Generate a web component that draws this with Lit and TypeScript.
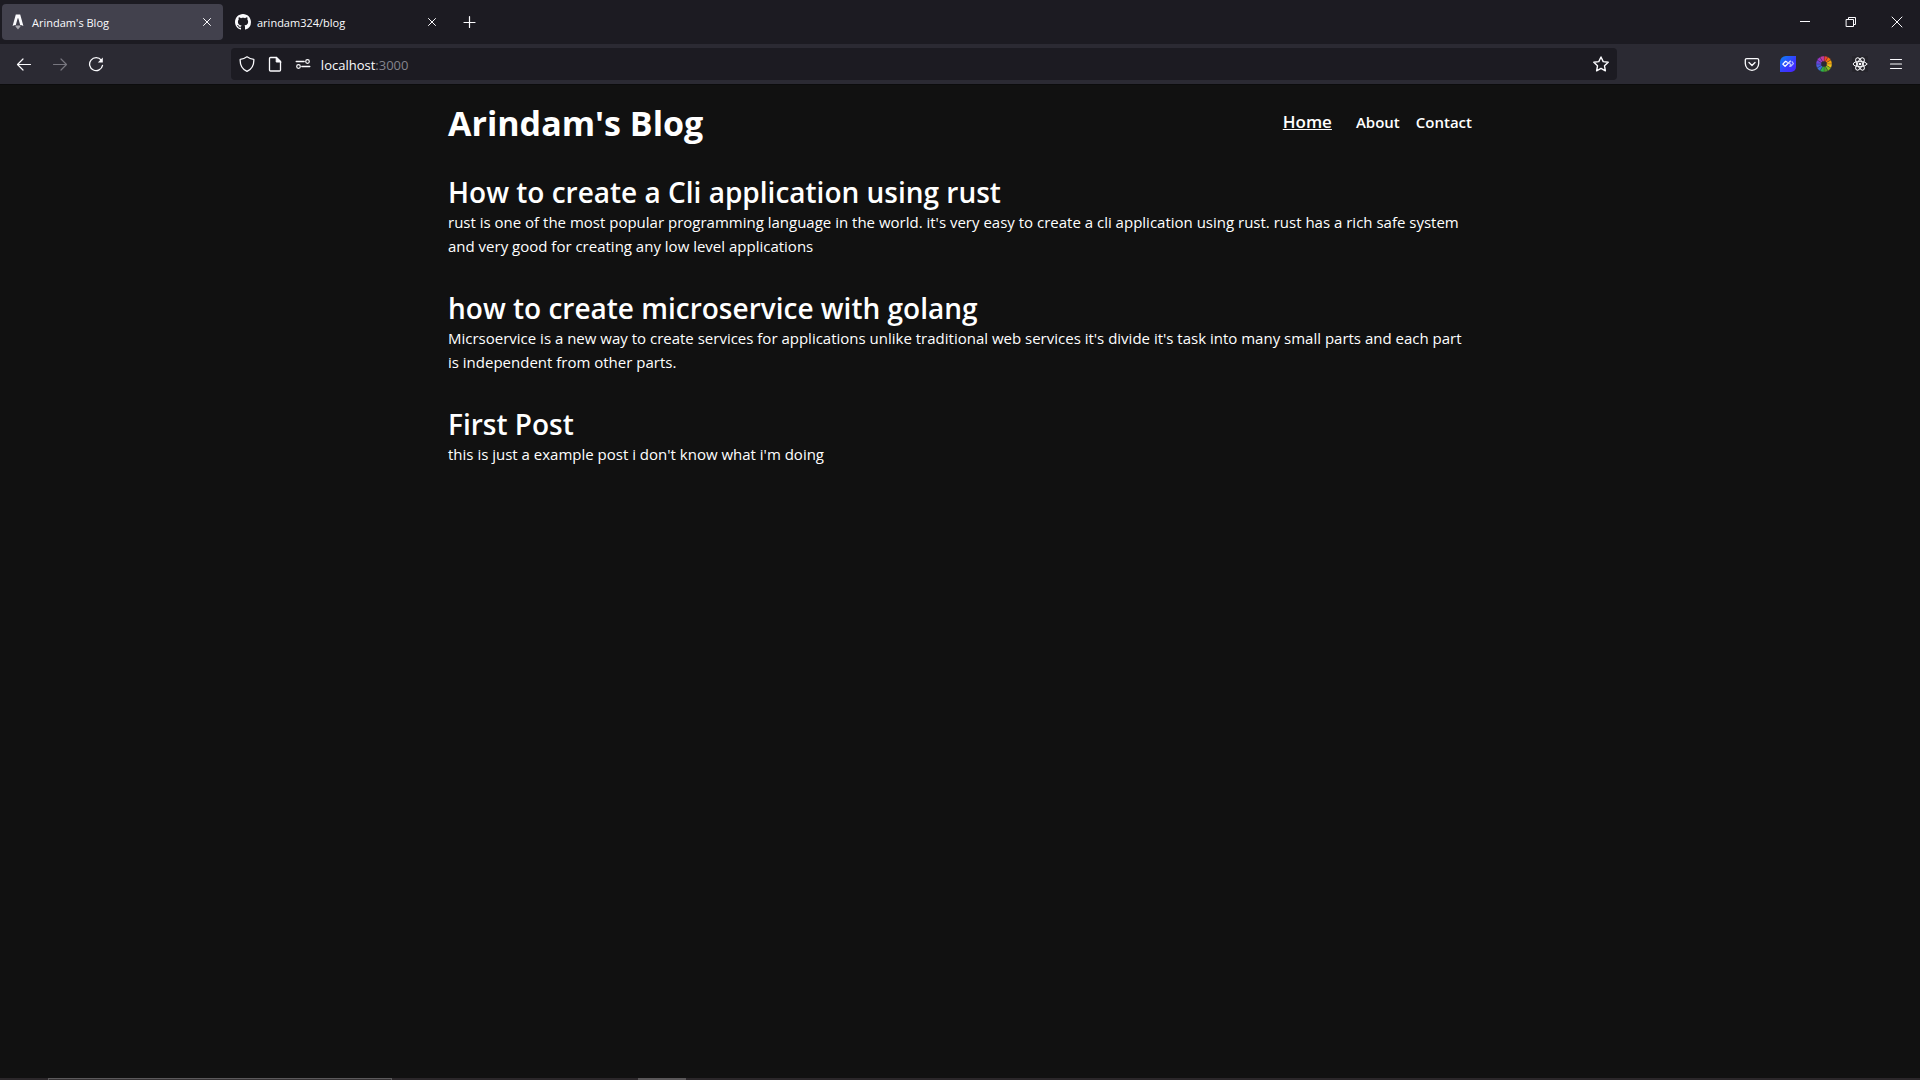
import { LitElement, html, css, svg } from "lit";
import { customElement } from "lit/decorators.js";

interface Post {
  title: string;
  body: string;
}

const posts: Post[] = [
  {
    title: "How to create a Cli application using rust",
    body: "rust is one of the most popular programming language in the world. it's very easy to create a cli application using rust. rust has a rich safe system and very good for creating any low level applications",
  },
  {
    title: "how to create microservice with golang",
    body: "Micrsoervice is a new way to create services for applications unlike traditional web services it's divide it's task into many small parts and each part is independent from other parts.",
  },
  {
    title: "First Post",
    body: "this is just a example post i don't know what i'm doing",
  },
];

const icon = (body: unknown, size = 16) => html`<svg
  width=${size} height=${size} viewBox="0 0 ${size} ${size}" fill="none"
  stroke="currentColor" stroke-linecap="round" stroke-linejoin="round" aria-hidden="true"
>${body}</svg>`;

const icons = {
  astro: icon(svg`
    <path d="M5.8.4h4.4L13.4 12a9 9 0 0 0-3.200-.9L8.300 4.200h-.6L5.800 11.100a9 9 0 0 0-3.200.9z" fill="currentColor" stroke="none"/>
    <path d="M5.400 11.600h5.200c.2 1.600-1.200 1.900-2.600 4-1.400-2.100-2.800-2.400-2.600-4z" fill="#a9a8b0" stroke="none"/>`),
  github: icon(svg`<path fill="currentColor" stroke="none" fill-rule="evenodd" d="M8 0C3.58 0 0 3.58 0 8c0 3.54 2.29 6.53 5.47 7.59.4.07.55-.17.55-.38 0-.19-.01-.82-.01-1.49-2.01.37-2.53-.49-2.69-.94-.09-.23-.48-.94-.82-1.13-.28-.15-.68-.52-.01-.53.63-.01 1.08.58 1.23.82.72 1.21 1.87.87 2.33.66.07-.52.28-.87.51-1.07-1.78-.2-3.64-.89-3.64-3.95 0-.87.31-1.59.82-2.15-.08-.2-.36-1.02.08-2.12 0 0 .67-.21 2.2.82.64-.18 1.32-.27 2-.27s1.36.09 2 .27c1.53-1.04 2.2-.82 2.2-.82.44 1.1.16 1.92.08 2.12.51.56.82 1.27.82 2.15 0 3.07-1.87 3.75-3.65 3.95.29.25.54.73.54 1.48 0 1.07-.01 1.93-.01 2.2 0 .21.15.46.55.38A8.01 8.01 0 0 0 16 8c0-4.42-3.58-8-8-8z"/>`),
  close: icon(svg`<path d="M4.5 4.5l7 7M11.5 4.5l-7 7"/>`),
  plus: icon(svg`<path d="M7.5 2.5v11M2 8.500h11" stroke-width="1.2"/>`),
  back: icon(svg`<path d="M14.5 8.500h-13M7 3L1.500 8.500 7 14" stroke-width="1.2"/>`),
  forward: icon(svg`<path d="M1.5 8.500h13M9 3l5.500 5.500L9 14" stroke-width="1.2"/>`),
  reload: icon(svg`<path d="M13.3 4.200A6.500 6.500 0 1 0 14.500 9.300" stroke-width="1.3"/><path d="M14.8 1.600v5h-5z" fill="currentColor" stroke="none"/>`),
  shield: icon(svg`<path d="M8 .8c2 1.500 4.300 2.300 6.800 2.500.3 5.200-1.700 9.700-6.800 12-5.100-2.300-7.100-6.800-6.800-12C3.700 3.100 6 2.300 8 .8z" stroke-width="1.3"/>`),
  page: icon(svg`<path d="M3.500 1.500h6l4 4v8.500q0 1-1 1h-9q-1 0-1-1v-11.500q0-1 1-1z" stroke-width="1.3"/><path d="M9.200 1.500v4.500h4.600z" fill="currentColor"/>`),
  permissions: icon(svg`<path d="M1.200 5.500h8M6.800 10.500h8" stroke-width="1.3"/><circle cx="12.5" cy="5.5" r="1.8" stroke-width="1.2"/><circle cx="3.5" cy="10.5" r="1.8" stroke-width="1.2"/>`),
  star: icon(svg`<path d="M8 1l2.200 4.600 5 .7-3.700 3.500.9 5-4.400-2.400-4.400 2.400.9-5L.8 6.300l5-.7z" stroke-width="1.4"/>`),
  pocket: icon(svg`<path d="M2.700 2.600h10.600q1.400 0 1.400 1.400v3.600a6.700 6.700 0 0 1-13.400 0V4q0-1.400 1.400-1.400z" stroke-width="1.3"/><path d="M5 6.600l3 2.800 3-2.800" stroke-width="1.4"/>`),
  daily: icon(svg`
    <defs><linearGradient id="tile" x1="0" y1="0" x2="1" y2="1"><stop offset="0" stop-color="#0a84f5"/><stop offset=".6" stop-color="#3a38ff"/><stop offset="1" stop-color="#4a22ff"/></linearGradient></defs>
    <path d="M6 0h10v11a5 5 0 0 1-5 5H0V6a6 6 0 0 1 6-6z" fill="url(#tile)" stroke="none"/>
    <path d="M7.200 6.200L5.600 5.300 2.800 8.100l2.300 2.300L10.300 5.300" stroke="#fff" stroke-width="1.3"/>
    <path d="M10.300 5.300L9 7l1.900 1.500-1.200 1.800M12 5.700l1.400 1.900-2.600 2.700" stroke="#b4bcff" stroke-width="1.2"/>`),
  wheel: icon(svg`${[
    "#ef3e36", "#f4720b", "#f9a70b", "#f3c01c", "#8bbf1c", "#4d9e2c",
    "#2fb14a", "#3a74d8", "#4a5be0", "#6a45dc", "#9a38c8", "#c03aa0",
  ].map((color, i) => svg`<path d="M8 8V0a8 8 0 0 1 4 1.070z" fill=${color} stroke="#2b2a33" stroke-width=".3" transform="rotate(${i * 30} 8 8)"/>`)}
    <circle cx="8" cy="8" r="2.8" fill="#2b2a33" stroke="none"/>`),
  react: icon(svg`<rect width="16" height="16" fill="#25242b" stroke="none"/>
    ${[0, 60, 120].map((a) => svg`<ellipse cx="8" cy="8" rx="6.8" ry="2.700" stroke-width="1" transform="rotate(${a} 8 8)"/>`)}
    <circle cx="8" cy="8" r="1.3" fill="currentColor" stroke="none"/>`),
  menu: icon(svg`<path d="M2.500 3.500h11M2.500 8h11M2.500 12.500h11" stroke-width="1.2"/>`),
  minimize: icon(svg`<path d="M3 7.500h10" stroke-linecap="butt"/>`),
  restore: icon(svg`<path d="M3.500 5.500h7v7h-7zM5.500 5.500v-2h7v7h-2" stroke-linejoin="miter"/>`),
  quit: icon(svg`<path d="M3 3l10 10M13 3L3 13"/>`),
};

@customElement("browser-chrome")
export class BrowserChrome extends LitElement {
  static styles = css`
    :host {
      display: block;
      color: #fbfbfe;
      font-family: "Open Sans", sans-serif;
    }
    svg {
      display: block;
    }
    button {
      display: grid;
      place-items: center;
      flex: none;
      padding: 0;
      border: 0;
      background: none;
      color: inherit;
      width: 36px;
      height: 32px;
    }
    .strip {
      display: flex;
      align-items: center;
      height: 44px;
      padding-left: 2px;
      background: #1c1b22;
    }
    .tab {
      display: flex;
      align-items: center;
      box-sizing: border-box;
      width: 221px;
      height: 36px;
      padding: 0 4px 0 8px;
      margin-right: 4px;
      border-radius: 4px;
      font-size: 11px;
    }
    .active {
      background: #42414d;
    }
    .label {
      flex: 1;
      padding-left: 6px;
    }
    .close {
      width: 24px;
      height: 24px;
    }
    .controls {
      display: flex;
      margin-left: auto;
    }
    .controls button {
      width: 46px;
    }
    .bar {
      display: flex;
      align-items: center;
      height: 40px;
      padding: 0 6px;
      background: #2b2a33;
    }
    .space {
      flex: 117;
    }
    .address {
      flex: 1386;
      display: flex;
      align-items: center;
      box-sizing: border-box;
      height: 32px;
      padding-left: 2px;
      border-radius: 4px;
      background: #1c1b22;
      font-size: 13px;
    }
    .address button {
      width: 28px;
    }
    .address .star {
      width: 32px;
    }
    .url {
      flex: 1;
      padding: 2px 0 0 4px;
    }
    .port {
      color: #85848d;
    }
    .disabled {
      color: #77767f;
    }
  `;

  render() {
    return html`
      <div class="strip">
        <div class="tab active">
          ${icons.astro}<span class="label">Arindam's Blog</span>
          <button class="close" aria-label="Close tab">${icons.close}</button>
        </div>
        <div class="tab">
          ${icons.github}<span class="label">arindam324/blog</span>
          <button class="close" aria-label="Close tab">${icons.close}</button>
        </div>
        <button aria-label="New tab">${icons.plus}</button>
        <div class="controls">
          <button aria-label="Minimize">${icons.minimize}</button>
          <button aria-label="Restore">${icons.restore}</button>
          <button aria-label="Close window">${icons.quit}</button>
        </div>
      </div>
      <div class="bar">
        <button aria-label="Back">${icons.back}</button>
        <button class="disabled" aria-label="Forward" disabled>${icons.forward}</button>
        <button aria-label="Reload">${icons.reload}</button>
        <div class="space"></div>
        <div class="address">
          <button aria-label="Tracking protection">${icons.shield}</button>
          <button aria-label="Site information">${icons.page}</button>
          <button aria-label="Permissions">${icons.permissions}</button>
          <span class="url">localhost<span class="port">:3000</span></span>
          <button class="star" aria-label="Bookmark">${icons.star}</button>
        </div>
        <div class="space"></div>
        <button aria-label="Save to Pocket">${icons.pocket}</button>
        <button aria-label="Daily">${icons.daily}</button>
        <button aria-label="Color wheel">${icons.wheel}</button>
        <button aria-label="React tools">${icons.react}</button>
        <button aria-label="Menu">${icons.menu}</button>
      </div>
    `;
  }
}

@customElement("blog-page")
export class BlogPage extends LitElement {
  static styles = css`
    :host {
      display: block;
      color: #fff;
      font-family: "Open Sans", sans-serif;
      font-size: 15px;
      line-height: 24px;
    }
    .column {
      max-width: 1024px;
      margin: 0 auto;
      padding: 16px;
    }
    header {
      display: flex;
      align-items: center;
      justify-content: space-between;
      height: 46px;
      margin-bottom: 28px;
    }
    h1,
    h2,
    p {
      margin: 0;
    }
    h1 {
      font-size: 34px;
      line-height: 40px;
      font-weight: 700;
    }
    h2 {
      font-size: 28px;
      line-height: 36px;
      font-weight: 600;
    }
    nav {
      display: flex;
      align-items: center;
      gap: 16px;
      padding-bottom: 2px;
      font-weight: 600;
    }
    a {
      color: inherit;
      text-decoration: none;
    }
    .current {
      margin-right: 8px;
      font-size: 17px;
      text-decoration: underline;
    }
    .posts {
      display: grid;
      gap: 32px;
    }
  `;

  render() {
    return html`
      <div class="column">
        <header>
          <h1>Arindam's Blog</h1>
          <nav>
            <a class="current" href="#home">Home</a>
            <a href="#about">About</a>
            <a href="#contact">Contact</a>
          </nav>
        </header>
        <main class="posts">
          ${posts.map(
            (post) => html`<article>
              <h2>${post.title}</h2>
              <p>${post.body}</p>
            </article>`,
          )}
        </main>
      </div>
    `;
  }
}

@customElement("app-root")
export class AppRoot extends LitElement {
  static styles = css`
    :host {
      display: flex;
      flex-direction: column;
      min-height: 100vh;
      background: #111;
    }
    blog-page {
      flex: 1;
      box-shadow: inset 0 1px #0c0c0d;
    }
    .taskbar {
      display: flex;
      height: 2px;
      background: #2b272a;
    }
    .search {
      box-sizing: border-box;
      width: 344px;
      margin: 0 246px 0 48px;
      border: 1px solid #5c5a5c;
      border-bottom: 0;
      background: #353234;
    }
    .task {
      width: 48px;
      background: #5a5759;
    }
  `;

  render() {
    return html`
      <browser-chrome></browser-chrome>
      <blog-page></blog-page>
      <div class="taskbar">
        <div class="search"></div>
        <div class="task"></div>
      </div>
    `;
  }
}
